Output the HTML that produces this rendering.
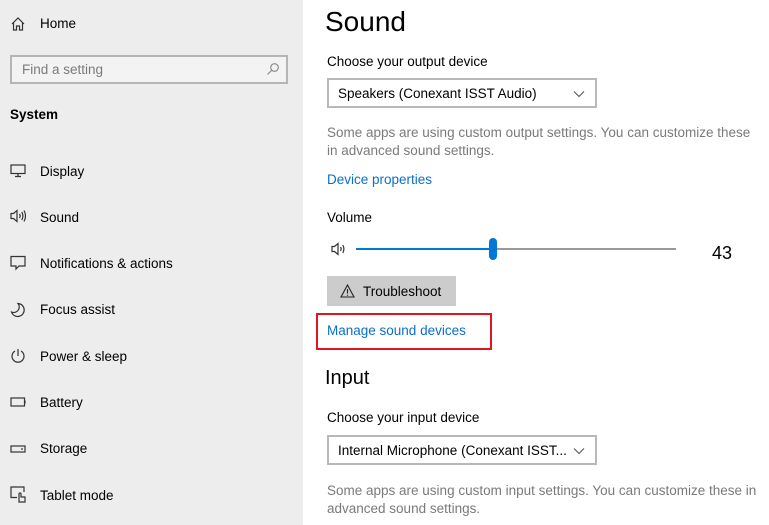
<!DOCTYPE html>
<html><head><meta charset="utf-8"><style>
*{margin:0;padding:0;box-sizing:border-box}
body{width:769px;height:525px;overflow:hidden;background:#fff;font-family:"Liberation Sans",sans-serif;font-size:13.5px;color:#000;position:relative}
.side{position:absolute;left:0;top:0;width:303px;height:525px;background:#ededed}
.a{position:absolute;white-space:nowrap}
.nav{position:absolute;left:40px;line-height:16px}
.ic{position:absolute;left:10px}
.gray{color:#7a7a7a}
.blue{color:#0a6fcc}
.dd{position:absolute;border:2px solid #b8b8b8;background:#fff;height:30px;width:270px;left:327px}
.dd span{position:absolute;left:9px;top:6px}
.dd svg{position:absolute;right:10px;top:10px}
</style></head><body>
<div class="side">
<svg class="ic" style="top:16px" width="16" height="16" viewBox="0 0 16 16" fill="none" stroke="#333" stroke-width="1.2"><path d="M2 8 L8 2 L14 8 M3.5 6.5 V14 H6.5 V10 H9.5 V14 H12.5 V6.5"/></svg>
<div class="a" style="left:40px;top:16px">Home</div>
<div class="a" style="left:10px;top:55px;width:278px;height:29px;border:2px solid #b5b5b5;background:#f3f3f3"></div>
<div class="a gray" style="left:22px;top:62px">Find a setting</div>
<svg class="a" style="left:266px;top:62px" width="14" height="14" viewBox="0 0 14 14" fill="none" stroke="#888" stroke-width="1.1"><circle cx="8.5" cy="5.5" r="3.8"/><path d="M5.8 8.2 L1.5 12.5"/></svg>
<div class="a" style="left:10px;top:107px;font-weight:bold">System</div>

<svg class="ic" style="top:164px" width="16" height="14" viewBox="0 0 16 14" fill="none" stroke="#333" stroke-width="1.2"><rect x="1" y="1" width="14" height="8.5"/><path d="M8 9.5 V12 M5 12.5 H11"/></svg>
<div class="nav" style="top:164px">Display</div>
<svg class="ic" style="top:209px" width="17" height="14" viewBox="0 0 17 14" fill="none" stroke="#333" stroke-width="1.2"><path d="M1 4.5 H3.5 L7 1.5 V12.5 L3.5 9.5 H1 Z M9.5 5 Q10.8 7 9.5 9 M11.8 3 Q14 7 11.8 11 M14 1.5 Q17 7 14 12.5"/></svg>
<div class="nav" style="top:210px">Sound</div>
<svg class="ic" style="top:255px" width="16" height="16" viewBox="0 0 16 16" fill="none" stroke="#333" stroke-width="1.2"><path d="M1 1.5 H15 V11 H9 L6 14 V11 H1 Z"/></svg>
<div class="nav" style="top:256px">Notifications &amp; actions</div>
<svg class="ic" style="top:302px" width="16" height="16" viewBox="0 0 16 16" fill="none" stroke="#333" stroke-width="1.2"><path d="M8 1.5 A6.5 6.5 0 1 1 1.5 10 A5.5 5.5 0 0 0 8 1.5 Z"/></svg>
<div class="nav" style="top:302px">Focus assist</div>
<svg class="ic" style="top:348px" width="16" height="16" viewBox="0 0 16 16" fill="none" stroke="#333" stroke-width="1.2"><path d="M5 3 A6 6 0 1 0 11 3 M8 1 V8"/></svg>
<div class="nav" style="top:349px">Power &amp; sleep</div>
<svg class="ic" style="top:397px" width="17" height="10" viewBox="0 0 17 10" fill="none" stroke="#333" stroke-width="1.2"><rect x="1" y="1" width="13.5" height="8"/><path d="M15 3.5 V6.5"/></svg>
<div class="nav" style="top:395px">Battery</div>
<svg class="ic" style="top:445px" width="16" height="8" viewBox="0 0 16 8" fill="none" stroke="#333" stroke-width="1.2"><rect x="1" y="1" width="14" height="6"/><path d="M11 4 H13"/></svg>
<div class="nav" style="top:441px">Storage</div>
<svg class="ic" style="top:486px" width="17" height="17" viewBox="0 0 17 17" fill="none" stroke="#333" stroke-width="1.2"><path d="M7 11.5 H1 V1 H14 V6 M9 16 V8 A1 1 0 0 1 11 8 V11 H15 V16 Z"/></svg>
<div class="nav" style="top:488px">Tablet mode</div>
</div>

<div class="a" style="left:325px;top:6px;font-size:28px">Sound</div>
<div class="a" style="left:327px;top:54px">Choose your output device</div>
<div class="dd" style="top:78px"><span>Speakers (Conexant ISST Audio)</span><svg width="12" height="8" viewBox="0 0 12 8" fill="none" stroke="#555" stroke-width="1.1"><path d="M1 1.5 L6 6.5 L11 1.5"/></svg></div>
<div class="a gray" style="left:327px;top:124px;line-height:18px">Some apps are using custom output settings. You can customize these<br>in advanced sound settings.</div>
<div class="a blue" style="left:327px;top:172px">Device properties</div>
<div class="a" style="left:327px;top:210px">Volume</div>
<svg class="a" style="left:331px;top:242px" width="17" height="14" viewBox="0 0 17 14" fill="none" stroke="#333" stroke-width="1.2"><path d="M1 4.5 H3.5 L7 1.5 V12.5 L3.5 9.5 H1 Z M9.5 5 Q10.8 7 9.5 9 M11.8 3 Q14 7 11.8 11"/></svg>
<div class="a" style="left:356px;top:248px;width:137px;height:2px;background:#0078d7"></div>
<div class="a" style="left:493px;top:248px;width:183px;height:2px;background:#999"></div>
<div class="a" style="left:489px;top:238px;width:8px;height:22px;border-radius:4px;background:#0078d7"></div>
<div class="a" style="left:712px;top:243px;font-size:18px">43</div>
<div class="a" style="left:327px;top:276px;width:129px;height:30px;background:#cccccc"></div>
<svg class="a" style="left:340px;top:284px" width="15" height="14" viewBox="0 0 15 14" fill="none" stroke="#222" stroke-width="1.1"><path d="M7.5 1 L14 13 H1 Z M7.5 5 V9.5 M7.5 10.7 V11.7"/></svg>
<div class="a" style="left:363px;top:284px">Troubleshoot</div>
<div class="a" style="left:316px;top:313px;width:176px;height:37px;border:2px solid #e0161e"></div>
<div class="a blue" style="left:327px;top:323px">Manage sound devices</div>
<div class="a" style="left:325px;top:367px;font-size:20px">Input</div>
<div class="a" style="left:327px;top:410px">Choose your input device</div>
<div class="dd" style="top:435px"><span>Internal Microphone (Conexant ISST...</span><svg width="12" height="8" viewBox="0 0 12 8" fill="none" stroke="#555" stroke-width="1.1"><path d="M1 1.5 L6 6.5 L11 1.5"/></svg></div>
<div class="a gray" style="left:327px;top:482px;line-height:18px">Some apps are using custom input settings. You can customize these in<br>advanced sound settings.</div>
</body></html>
